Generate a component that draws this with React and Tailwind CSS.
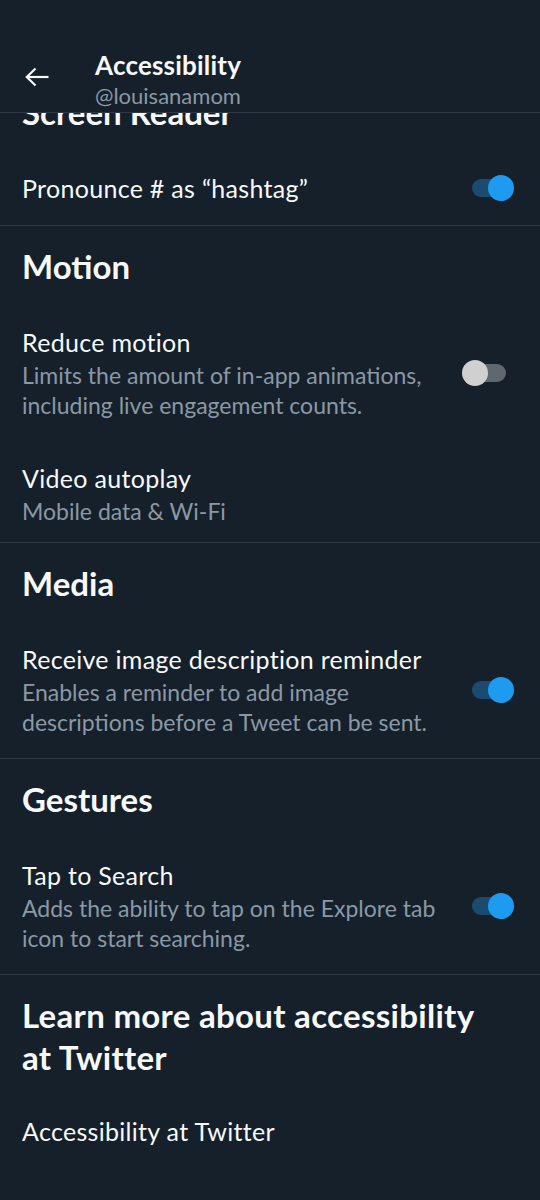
import { useState } from 'react';

const sections = [
    {
        title: 'Screen Reader',
        rows: [{ id: 'hashtag', label: 'Pronounce # as “hashtag”', toggle: true, on: true }],
    },
    {
        title: 'Motion',
        rows: [
            {
                id: 'motion',
                label: 'Reduce motion',
                desc: 'Limits the amount of in-app animations, including live engagement counts.',
                toggle: true,
                on: false,
            },
            { id: 'autoplay', label: 'Video autoplay', desc: 'Mobile data & Wi-Fi', last: true },
        ],
    },
    {
        title: 'Media',
        rows: [
            {
                id: 'alt',
                label: 'Receive image description reminder',
                desc: 'Enables a reminder to add image descriptions before a Tweet can be sent.',
                toggle: true,
                on: true,
            },
        ],
    },
    {
        title: 'Gestures',
        rows: [
            {
                id: 'tap',
                label: 'Tap to Search',
                desc: 'Adds the ability to tap on the Explore tab icon to start searching.',
                toggle: true,
                on: true,
            },
        ],
    },
];

const Toggle = ({ on, onChange }) => (
    <button
        onClick={onChange}
        className={`relative w-[34px] h-[18px] rounded-full shrink-0 ${on ? 'bg-[#1b4b70]' : 'bg-[#5f676f]'}`}
    >
        <span
            className={`absolute top-1/2 -translate-y-1/2 w-[26px] h-[26px] rounded-full transition-all ${on ? 'left-[16px] bg-[#1d9bf0]' : 'left-[-10px] bg-[#d0d0d0]'}`}
        />
    </button>
);

const SettingRow = ({ row, on, onToggle }) => (
    <div className={`flex items-center pl-[22px] pr-[34px] pt-[21px] ${row.last ? 'pb-[16px]' : 'pb-[21px]'}`}>
        <div className="flex-1 pr-[16px]">
            <p className="text-[25px] leading-[32px] tracking-[0.3px] text-[#f7f9f9]">{row.label}</p>
            {row.desc && (
                <p className="mt-[2px] text-[23px] leading-[30px] text-[#8b98a5]">{row.desc}</p>
            )}
        </div>
        {row.toggle && <Toggle on={on} onChange={onToggle} />}
    </div>
);

export default function App() {
    const [toggles, setToggles] = useState(() => {
        const init = {};
        sections.forEach(s => s.rows.forEach(r => { if (r.toggle) init[r.id] = r.on; }));
        return init;
    });

    const flip = id => setToggles({ ...toggles, [id]: !toggles[id] });

    return (
        <div
            className="relative w-[540px] h-[1200px] overflow-hidden bg-[#15202b] text-[#f7f9f9]"
            style={{ fontFamily: 'Lato, "Noto Sans", sans-serif' }}
        >
            {/* Top bar sits over the scrolled list, hiding the first heading's top half */}
            <header className="absolute top-0 inset-x-0 z-10 h-[113px] bg-[#15202b] border-b border-[#2f3943] flex items-start pt-[50px]">
                <button className="w-[95px] pl-[25px] pt-[17px]">
                    <svg width="24" height="20" viewBox="0 0 24 20" fill="none" stroke="#f7f9f9" strokeWidth="2.2" strokeLinejoin="miter">
                        <path d="M1.8 10H23.5" />
                        <path d="M10.5 1.5L1.8 10l8.7 8.5" />
                    </svg>
                </button>
                <div>
                    <h1 className="text-[26px] leading-[31px] font-bold tracking-[0.2px]">Accessibility</h1>
                    <p className="mt-[2px] text-[22px] leading-[26px] text-[#8b98a5]">@louisanamom</p>
                </div>
            </header>

            <main className="pt-[72px]">
                {sections.map(section => (
                    <section key={section.title} className="border-b border-[#2f3943]">
                        <h2 className="px-[22px] pt-[20px] pb-[19px] text-[33px] leading-[40px] font-bold">
                            {section.title}
                        </h2>
                        {section.rows.map(row => (
                            <SettingRow key={row.id} row={row} on={toggles[row.id]} onToggle={() => flip(row.id)} />
                        ))}
                    </section>
                ))}

                <section>
                    <h2 className="px-[22px] pt-[19px] text-[33px] leading-[42px] font-bold tracking-[0.3px]">
                        Learn more about accessibility
                        <br />
                        at Twitter
                    </h2>
                    <a className="block px-[22px] pt-[37px] text-[25px] leading-[32px] tracking-[0.3px] text-[#f7f9f9]">
                        Accessibility at Twitter
                    </a>
                </section>
            </main>
        </div>
    );
}
